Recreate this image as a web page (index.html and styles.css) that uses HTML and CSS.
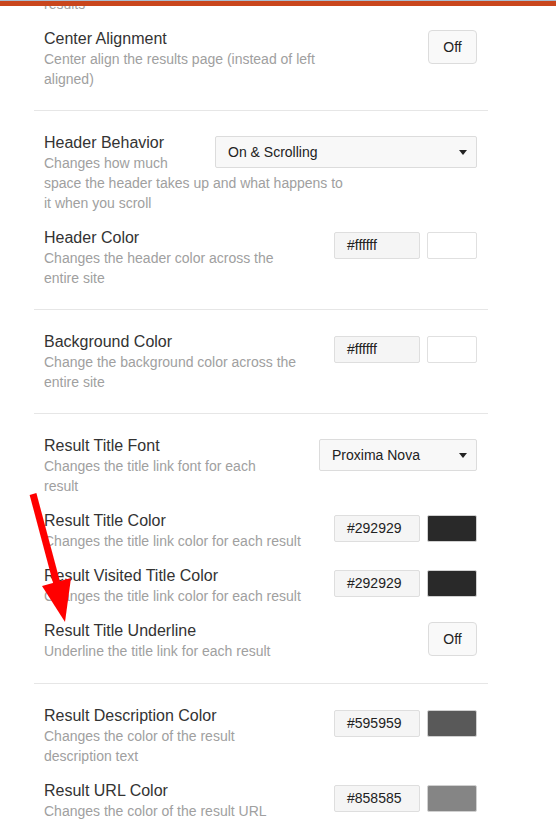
FILE: index.html
```html
<!DOCTYPE html>
<html>
<head>
<meta charset="utf-8">
<link rel="stylesheet" href="styles.css">
</head>
<body>
<div class="topbar"></div>
<div class="panel">
  <section class="group first tight">
    <div class="row">
      <div class="text"><div class="desc">results</div></div>
    </div>
    <div class="row">
      <div class="ctl toggle">Off</div>
      <div class="text">
        <div class="title">Center Alignment</div>
        <div class="desc">Center align the results page (instead of left aligned)</div>
      </div>
    </div>
  </section>

  <section class="group tight">
    <div class="row">
      <div class="ctl select wide"><span>On &amp; Scrolling</span><i class="caret"></i></div>
      <div class="text">
        <div class="title">Header Behavior</div>
        <div class="desc">Changes how much space the header takes up and what happens to it when you scroll</div>
      </div>
    </div>
    <div class="row">
      <div class="ctl color"><span class="hex">#ffffff</span><span class="swatch" style="background:#ffffff"></span></div>
      <div class="text">
        <div class="title">Header Color</div>
        <div class="desc">Changes the header color across the entire site</div>
      </div>
    </div>
  </section>

  <section class="group tight">
    <div class="row">
      <div class="ctl color"><span class="hex">#ffffff</span><span class="swatch" style="background:#ffffff"></span></div>
      <div class="text">
        <div class="title">Background Color</div>
        <div class="desc">Change the background color across the entire site</div>
      </div>
    </div>
  </section>

  <section class="group">
    <div class="row">
      <div class="ctl select narrow"><span>Proxima Nova</span><i class="caret"></i></div>
      <div class="text">
        <div class="title">Result Title Font</div>
        <div class="desc">Changes the title link font for each result</div>
      </div>
    </div>
    <div class="row">
      <div class="ctl color"><span class="hex">#292929</span><span class="swatch dark" style="background:#292929"></span></div>
      <div class="text">
        <div class="title">Result Title Color</div>
        <div class="desc">Changes the title link color for each result</div>
      </div>
    </div>
    <div class="row">
      <div class="ctl color"><span class="hex">#292929</span><span class="swatch dark" style="background:#292929"></span></div>
      <div class="text">
        <div class="title">Result Visited Title Color</div>
        <div class="desc">Changes the title link color for each result</div>
      </div>
    </div>
    <div class="row">
      <div class="ctl toggle">Off</div>
      <div class="text">
        <div class="title">Result Title Underline</div>
        <div class="desc">Underline the title link for each result</div>
      </div>
    </div>
  </section>

  <section class="group">
    <div class="row">
      <div class="ctl color"><span class="hex">#595959</span><span class="swatch dark" style="background:#595959"></span></div>
      <div class="text">
        <div class="title">Result Description Color</div>
        <div class="desc">Changes the color of the result description text</div>
      </div>
    </div>
    <div class="row">
      <div class="ctl color"><span class="hex">#858585</span><span class="swatch dark" style="background:#858585"></span></div>
      <div class="text">
        <div class="title">Result URL Color</div>
        <div class="desc">Changes the color of the result URL</div>
      </div>
    </div>
  </section>
</div>

<svg class="arrow" width="556" height="830" viewBox="0 0 556 830">
  <line x1="33" y1="494" x2="57" y2="584" stroke="#ff0000" stroke-width="7"/>
  <polygon points="42,586 71,578 65,622" fill="#ff0000"/>
</svg>
</body>
</html>
```

FILE: styles.css
```css
html, body {
  margin: 0;
  padding: 0;
  background: #ffffff;
}

body {
  font-family: "Liberation Sans", Arial, sans-serif;
  color: #333333;
  overflow: hidden;
  height: 830px;
}

.topbar {
  position: fixed;
  top: 0;
  left: 0;
  right: 0;
  height: 5px;
  background: #c9461d;
  border-top: 1px solid #aabdd1;
  z-index: 5;
}

.panel {
  margin-left: 34px;
  width: 454px;
}

.group {
  padding: 22px 11px 22px 10px;
  border-bottom: 1px solid #e6e6e6;
}

.group.tight {
  padding-bottom: 21px;
}

.group.first {
  padding-top: 0;
  margin-top: -6px;
}

.row {
  display: flow-root;
  margin-bottom: 15px;
}

.row:last-child {
  margin-bottom: 0;
}

.text {
  max-width: 308px;
}

.title {
  font-size: 16px;
  line-height: 20px;
  color: #333333;
}

.desc {
  font-size: 14px;
  line-height: 20px;
  color: #a0a0a0;
}

.ctl {
  float: right;
  margin-left: 28px;
  box-sizing: border-box;
  font-size: 14px;
  color: #222222;
}

.toggle {
  margin-top: 1px;
  width: 49px;
  height: 34px;
  line-height: 32px;
  text-align: center;
  border: 1px solid #dcdcdc;
  border-radius: 4px;
  background: #f9f9f9;
}

.select {
  margin-top: 3px;
  height: 32px;
  display: flex;
  align-items: center;
  padding: 0 9px 0 12px;
  border: 1px solid #dcdcdc;
  border-radius: 2px;
  background: #f8f8f8;
}

.select.wide {
  width: 262px;
}

.select.narrow {
  width: 158px;
}

.caret {
  margin-left: auto;
  width: 0;
  height: 0;
  border-left: 4px solid transparent;
  border-right: 4px solid transparent;
  border-top: 5px solid #222222;
}

.color {
  margin-top: 4px;
  display: flex;
  gap: 7px;
}

.hex {
  box-sizing: border-box;
  width: 86px;
  height: 27px;
  line-height: 25px;
  padding-left: 12px;
  border: 1px solid #dedede;
  border-radius: 2px;
  background: #f5f5f5;
  color: #222222;
}

.swatch {
  box-sizing: border-box;
  width: 50px;
  height: 27px;
  border: 1px solid #e0e0e0;
  border-radius: 2px;
}

.swatch.dark {
  border-color: #d0d0d0;
}

.arrow {
  position: absolute;
  left: 0;
  top: 0;
  pointer-events: none;
  z-index: 10;
}
```
